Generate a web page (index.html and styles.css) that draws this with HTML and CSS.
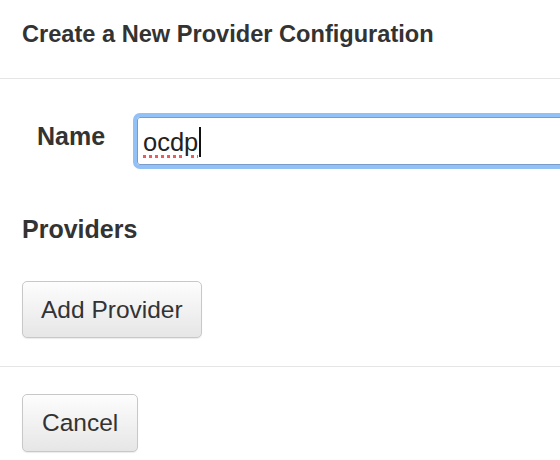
FILE: index.html
```html
<!DOCTYPE html>
<html>
<head>
<meta charset="utf-8">
<link rel="stylesheet" href="styles.css">
</head>
<body>
<div class="modal">
  <div class="modal-header">
    <h4 class="modal-title">Create a New Provider Configuration</h4>
  </div>
  <div class="modal-body">
    <div class="form-row">
      <label class="form-label">Name</label>
      <div class="field"><span class="field-text">ocdp</span><span class="caret"></span></div>
    </div>
    <h4 class="section-title">Providers</h4>
    <button class="btn">Add Provider</button>
  </div>
  <div class="modal-footer">
    <button class="btn btn-cancel">Cancel</button>
  </div>
</div>
</body>
</html>
```
FILE: styles.css
```css
html, body {
  margin: 0;
  padding: 0;
  background: #fff;
  overflow: hidden;
}
body {
  font-family: "Liberation Sans", Arial, sans-serif;
  color: #333;
  width: 560px;
  height: 460px;
}
.modal {
  width: 560px;
  overflow: hidden;
}
.modal-header {
  padding: 15px 22px 25px;
  border-bottom: 1px solid #e5e5e5;
}
.modal-title {
  margin: 0;
  font-size: 23.6px;
  line-height: 38px;
  font-weight: bold;
  color: #333;
}
.modal-body {
  padding: 38px 22px 28px;
}
.form-row {
  display: flex;
  align-items: center;
  width: 700px;
}
.form-label {
  width: 115px;
  padding-left: 15px;
  margin-top: -10px;
  box-sizing: border-box;
  font-size: 25px;
  font-weight: bold;
}
.field {
  flex: 1;
  height: 44px;
  border: 1px solid #7a9cc8;
  border-radius: 3px;
  box-shadow: 0 0 0 4px #91c1f6;
  display: flex;
  align-items: center;
  padding-left: 5px;
  padding-top: 2px;
  box-sizing: content-box;
  font-size: 25.5px;
  color: #222;
}
.field-text {
  text-decoration: underline dotted #f05a5a 3px;
  text-underline-offset: 4px;
}
.caret {
  display: inline-block;
  width: 2px;
  height: 30px;
  background: #111;
  margin-left: 1px;
}
.section-title {
  margin: 50px 0 0;
  font-size: 25px;
  font-weight: bold;
  line-height: 28px;
}
.btn {
  display: inline-block;
  margin-top: 38px;
  font-family: "Liberation Sans", Arial, sans-serif;
  font-size: 24.5px;
  color: #333;
  padding: 0 18px;
  height: 57px;
  border: 1px solid #c8c8c8;
  border-radius: 5px;
  background: linear-gradient(#fdfdfd, #e6e6e6);
  box-shadow: 0 1px 1px rgba(0,0,0,0.08);
}
.modal-footer {
  border-top: 1px solid #e5e5e5;
  padding: 27px 22px;
}
.btn-cancel {
  margin-top: 0;
  height: 58px;
  padding: 0 19px;
}
```
